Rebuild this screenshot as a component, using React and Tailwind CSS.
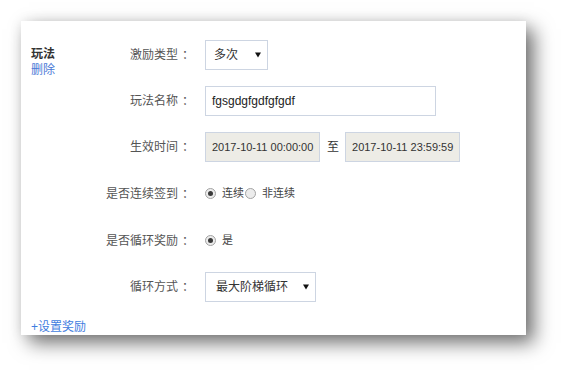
import React from "react";

const font = { fontFamily: '"Liberation Sans", "Noto Sans CJK SC", sans-serif' };

const Arrow = () => (
  <svg width="6" height="6" viewBox="0 0 6 6" className="shrink-0">
    <path d="M0 0.5 L6 0.5 L3 5.5 Z" fill="#111" />
  </svg>
);

const Radio = ({ checked }) => (
  <span className="w-[11px] h-[11px] rounded-full border border-[#a3a3a3] bg-[#ececec] flex items-center justify-center shrink-0">
    {checked && <span className="w-[5px] h-[5px] rounded-full bg-[#3a3a3a]" />}
  </span>
);

const Row = ({ label, h, children }) => (
  <div className={`flex items-center ${h}`}>
    <div className="w-[94px] flex justify-end text-[12px] text-[#555] whitespace-nowrap">
      <span>{label}</span>
      <span className="ml-[4px]">：</span>
    </div>
    <div className="ml-[11px] flex items-center">{children}</div>
  </div>
);

export default function App() {
  return (
    <div className="min-h-screen bg-white pt-[21px] pl-[21px]" style={font}>
      <div className="w-[505px] h-[314px] bg-white shadow-[8px_8px_18px_rgba(0,0,0,0.55),0_0_12px_rgba(0,0,0,0.08)] flex flex-col pl-[10px] pt-[11px]">
        <div className="flex">
          <div className="w-[69px] flex flex-col">
            <span className="mt-[14px] leading-4 text-[12px] font-bold text-[#333]">玩法</span>
            <span className="leading-4 text-[12px] text-[#4a78d6]">删除</span>
          </div>
          <div className="flex flex-col">
            <Row label="激励类型" h="h-[46px]">
              <div className="w-[63px] h-[30px] border border-[#cdd5e2] flex items-center justify-between pl-[8px] pr-[6px] text-[12px] text-[#333]">
                <span>多次</span>
                <Arrow />
              </div>
            </Row>
            <Row label="玩法名称" h="h-[46px]">
              <div className="w-[231px] h-[30px] border border-[#cdd5e2] flex items-center pl-[6px] text-[12px] text-[#222]">
                fgsgdgfgdfgfgdf
              </div>
            </Row>
            <Row label="生效时间" h="h-[46px]">
              <div className="w-[115px] h-[30px] border border-[#cdd5e2] bg-[#edece6] flex items-center pl-[6px] text-[11px] text-[#333] whitespace-nowrap">
                2017-10-11 00:00:00
              </div>
              <span className="ml-[7px] mr-[6px] text-[12px] text-[#333]">至</span>
              <div className="w-[115px] h-[30px] border border-[#cdd5e2] bg-[#edece6] flex items-center pl-[6px] text-[11px] text-[#333] whitespace-nowrap">
                2017-10-11 23:59:59
              </div>
            </Row>
            <Row label="是否连续签到" h="h-[47px]">
              <Radio checked />
              <span className="ml-[6px] text-[11px] text-[#444]">连续</span>
              <span className="ml-[1px]"><Radio /></span>
              <span className="ml-[6px] text-[11px] text-[#444]">非连续</span>
            </Row>
            <Row label="是否循环奖励" h="h-[47px]">
              <Radio checked />
              <span className="ml-[6px] text-[11px] text-[#444]">是</span>
            </Row>
            <Row label="循环方式" h="h-[46px]">
              <div className="w-[111px] h-[30px] border border-[#cdd5e2] flex items-center justify-between pl-[10px] pr-[6px] text-[12px] text-[#333]">
                <span>最大阶梯循环</span>
                <Arrow />
              </div>
            </Row>
          </div>
        </div>
        <div className="mt-[9px] leading-4 text-[12px] text-[#3f7de0]">+设置奖励</div>
      </div>
    </div>
  );
}
